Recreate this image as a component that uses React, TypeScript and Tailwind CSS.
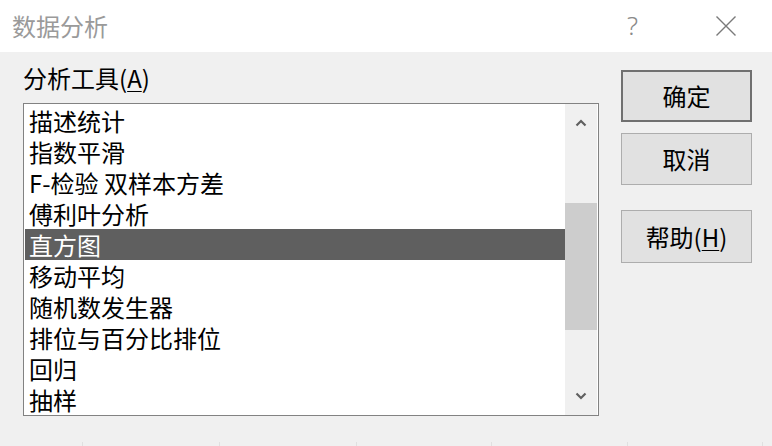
import React from "react";

const items = [
  "描述统计",
  "指数平滑",
  "F-检验 双样本方差",
  "傅利叶分析",
  "直方图",
  "移动平均",
  "随机数发生器",
  "排位与百分比排位",
  "回归",
  "抽样",
];

const font = { fontFamily: '"Noto Sans CJK SC", "Noto Sans", sans-serif' };

function ChevronUp() {
  return (
    <svg width="12" height="8" viewBox="0 0 12 8">
      <path d="M1.5 6.5 L6 2 L10.5 6.5" fill="none" stroke="#606060" strokeWidth="2.2" />
    </svg>
  );
}
function ChevronDown() {
  return (
    <svg width="12" height="8" viewBox="0 0 12 8">
      <path d="M1.5 1.5 L6 6 L10.5 1.5" fill="none" stroke="#606060" strokeWidth="2.2" />
    </svg>
  );
}

export default function App() {
  return (
    <div className="w-[772px] h-[446px] flex flex-col overflow-hidden" style={font}>
      {/* title bar */}
      <div className="h-[52px] bg-white flex items-center shrink-0">
        <div className="pl-[12px] text-[24px] leading-[28px] text-[#9a9a9a] flex-1">数据分析</div>
        <div
          className="w-[14px] text-[26px] leading-[30px] text-[#8a8a8a] mr-[75px] pb-[2px]"
          style={{ fontFamily: '"Noto Sans", sans-serif', fontWeight: 300 }}
        >
          ?
        </div>
        <svg width="20" height="20" viewBox="0 0 20 20" className="mr-[36px]">
          <path d="M0.5 0.5 L19.5 19.5 M19.5 0.5 L0.5 19.5" stroke="#7a7a7a" strokeWidth="1.4" fill="none" />
        </svg>
      </div>
      {/* body */}
      <div className="flex-1 bg-[#f0f0f0] flex flex-col">
        <div className="flex-1 flex pl-[23px]">
          <div className="w-[576px] flex flex-col">
            <div className="h-[51px] pt-[11px] text-[24px] leading-[30px] text-black">
              分析工具(<span className="underline underline-offset-[3px] decoration-1">A</span>)
            </div>
            <div className="h-[313px] border border-[#828282] bg-white flex">
              <div className="flex-1 pt-[1px] pl-[1px]">
                {items.map((t, i) => (
                  <div
                    key={t}
                    className={
                      "h-[31px] pl-[4px] text-[24px] leading-[31px] whitespace-nowrap " +
                      (i === 4 ? "bg-[#5f5f5f] text-white" : "text-black")
                    }
                  >
                    {t}
                  </div>
                ))}
              </div>
              <div className="w-[32px] mr-[1px] bg-[#f0f0f0] flex flex-col">
                <div className="h-[38px] flex items-center justify-center">
                  <ChevronUp />
                </div>
                <div className="flex-1">
                  <div className="mt-[61px] h-[127px] bg-[#cdcdcd]" />
                </div>
                <div className="h-[38px] flex items-center justify-center">
                  <ChevronDown />
                </div>
              </div>
            </div>
          </div>
          <div className="ml-[22px] pt-[18px] flex flex-col">
            <button className="w-[131px] h-[52px] border-2 border-[#707070] bg-[#e1e1e1] text-[24px] leading-[28px] text-black">
              确定
            </button>
            <button className="mt-[11px] w-[131px] h-[52px] border border-[#adadad] bg-[#e1e1e1] text-[24px] leading-[28px] text-black">
              取消
            </button>
            <button className="mt-[25px] w-[131px] h-[53px] border border-[#adadad] bg-[#e1e1e1] text-[24px] leading-[28px] text-black">
              帮助(<span className="underline underline-offset-[3px] decoration-1">H</span>)
            </button>
          </div>
        </div>
        <div className="h-[4px] flex">
          {[83, 137, 137, 135, 136, 135].map((w, i) => (
            <div key={i} className="h-full border-r border-[#e0e0e0]" style={{ width: w }} />
          ))}
        </div>
      </div>
    </div>
  );
}
